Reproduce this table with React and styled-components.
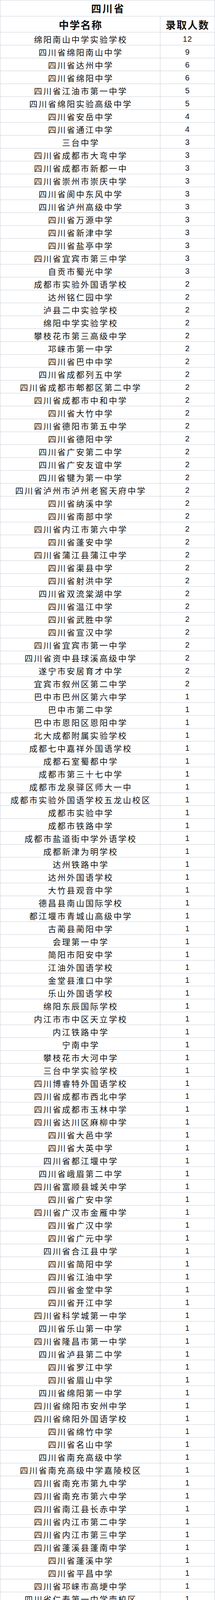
import React from 'react';
import styled, { createGlobalStyle } from 'styled-components';

const GlobalStyle = createGlobalStyle`
  html, body {
    margin: 0;
    padding: 0;
    background: #ffffff;
  }
  body {
    font-family: "Noto Sans CJK SC", "Noto Sans", sans-serif;
    color: #111111;
  }
`;

const LINE = '#cdd0da';

const Sheet = styled.div`
  width: 551px;
  box-sizing: border-box;
  display: flex;
  flex-direction: column;
  border-top: 1px solid ${LINE};
  border-left: 1px solid ${LINE};
  border-right: 1px solid ${LINE};
  background: #ffffff;
  overflow: hidden;
`;

const Title = styled.div`
  flex: none;
  height: 41px;
  box-sizing: border-box;
  border-bottom: 1px solid ${LINE};
  display: flex;
  align-items: center;
  justify-content: center;
  font-size: 26px;
  font-weight: 700;
  letter-spacing: 3px;
  padding-left: 3px;
  line-height: 1;
  overflow: hidden;
`;

const Row = styled.div`
  flex: none;
  display: flex;
  height: ${(p) => (p.$head ? 41 : 33)}px;
  box-sizing: border-box;
  border-bottom: 1px solid ${LINE};
  overflow: hidden;
`;

const NameCell = styled.div`
  flex: none;
  width: 410px;
  height: 100%;
  box-sizing: border-box;
  display: flex;
  align-items: center;
  justify-content: center;
  border-right: 1px solid ${LINE};
  font-size: ${(p) => (p.$head ? 26 : 21)}px;
  font-weight: ${(p) => (p.$head ? 700 : 400)};
  letter-spacing: ${(p) => (p.$head ? 2 : 3)}px;
  padding-left: ${(p) => (p.$head ? 2 : 3)}px;
  padding-top: 2px;
  white-space: nowrap;
  line-height: 1;
  overflow: hidden;
`;

const CountCell = styled.div`
  flex: 1;
  height: 100%;
  box-sizing: border-box;
  display: flex;
  align-items: center;
  justify-content: center;
  font-family: ${(p) =>
    p.$head ? '"Noto Sans CJK SC", sans-serif' : '"Liberation Sans", Arial, sans-serif'};
  font-size: ${(p) => (p.$head ? 26 : 20)}px;
  font-weight: ${(p) => (p.$head ? 700 : 400)};
  letter-spacing: ${(p) => (p.$head ? 2 : 1)}px;
  padding-top: 2px;
  line-height: 1;
  overflow: hidden;
`;

const schools = [
  ['绵阳南山中学实验学校', 12],
  ['四川省绵阳南山中学', 9],
  ['四川省达州中学', 6],
  ['四川省绵阳中学', 6],
  ['四川省江油市第一中学', 5],
  ['四川省绵阳实验高级中学', 5],
  ['四川省安岳中学', 4],
  ['四川省通江中学', 4],
  ['三台中学', 3],
  ['四川省成都市大弯中学', 3],
  ['四川省成都市新都一中', 3],
  ['四川省崇州市崇庆中学', 3],
  ['四川省阆中东风中学', 3],
  ['四川省泸州高级中学', 3],
  ['四川省万源中学', 3],
  ['四川省新津中学', 3],
  ['四川省盐亭中学', 3],
  ['四川省宜宾市第三中学', 3],
  ['自贡市蜀光中学', 3],
  ['成都市实验外国语学校', 2],
  ['达州铭仁园中学', 2],
  ['泸县二中实验学校', 2],
  ['绵阳中学实验学校', 2],
  ['攀枝花市第三高级中学', 2],
  ['邛崃市第一中学', 2],
  ['四川省巴中中学', 2],
  ['四川省成都列五中学', 2],
  ['四川省成都市郫都区第二中学', 2],
  ['四川省成都市中和中学', 2],
  ['四川省大竹中学', 2],
  ['四川省德阳市第五中学', 2],
  ['四川省德阳中学', 2],
  ['四川省广安第二中学', 2],
  ['四川省广安友谊中学', 2],
  ['四川省犍为第一中学', 2],
  ['四川省泸州市泸州老窖天府中学', 2],
  ['四川省纳溪中学', 2],
  ['四川省南部中学', 2],
  ['四川省内江市第六中学', 2],
  ['四川省蓬安中学', 2],
  ['四川省蒲江县蒲江中学', 2],
  ['四川省渠县中学', 2],
  ['四川省射洪中学', 2],
  ['四川省双流棠湖中学', 2],
  ['四川省温江中学', 2],
  ['四川省武胜中学', 2],
  ['四川省宣汉中学', 2],
  ['四川省宜宾市第一中学', 2],
  ['四川省资中县球溪高级中学', 2],
  ['遂宁市安居育才中学', 2],
  ['宜宾市叙州区第二中学', 2],
  ['巴中市巴州区第六中学', 1],
  ['巴中市第二中学', 1],
  ['巴中市恩阳区恩阳中学', 1],
  ['北大成都附属实验学校', 1],
  ['成都七中嘉祥外国语学校', 1],
  ['成都石室蜀都中学', 1],
  ['成都市第三十七中学', 1],
  ['成都市龙泉驿区师大一中', 1],
  ['成都市实验外国语学校五龙山校区', 1],
  ['成都市实验中学', 1],
  ['成都市铁路中学', 1],
  ['成都市盐道街中学外语学校', 1],
  ['成都新津为明学校', 1],
  ['达州铁路中学', 1],
  ['达州外国语学校', 1],
  ['大竹县观音中学', 1],
  ['德昌县南山国际学校', 1],
  ['都江堰市青城山高级中学', 1],
  ['古蔺县蔺阳中学', 1],
  ['会理第一中学', 1],
  ['简阳市阳安中学', 1],
  ['江油外国语学校', 1],
  ['金堂县淮口中学', 1],
  ['乐山外国语学校', 1],
  ['绵阳东辰国际学校', 1],
  ['内江市市中区天立学校', 1],
  ['内江铁路中学', 1],
  ['宁南中学', 1],
  ['攀枝花市大河中学', 1],
  ['三台中学实验学校', 1],
  ['四川博睿特外国语学校', 1],
  ['四川省成都市西北中学', 1],
  ['四川省成都市玉林中学', 1],
  ['四川省达川区麻柳中学', 1],
  ['四川省大邑中学', 1],
  ['四川省大英中学', 1],
  ['四川省都江堰中学', 1],
  ['四川省峨眉第二中学', 1],
  ['四川省富顺县城关中学', 1],
  ['四川省广安中学', 1],
  ['四川省广汉市金雁中学', 1],
  ['四川省广汉中学', 1],
  ['四川省广元中学', 1],
  ['四川省合江县中学', 1],
  ['四川省简阳中学', 1],
  ['四川省江油中学', 1],
  ['四川省金堂中学', 1],
  ['四川省开江中学', 1],
  ['四川省科学城第一中学', 1],
  ['四川省乐山第一中学', 1],
  ['四川省隆昌市第一中学', 1],
  ['四川省泸县第二中学', 1],
  ['四川省罗江中学', 1],
  ['四川省眉山中学', 1],
  ['四川省绵阳第一中学', 1],
  ['四川省绵阳市安州中学', 1],
  ['四川省绵阳外国语学校', 1],
  ['四川省绵竹中学', 1],
  ['四川省名山中学', 1],
  ['四川省南充高级中学', 1],
  ['四川省南充高级中学嘉陵校区', 1],
  ['四川省南充市第九中学', 1],
  ['四川省南充市第六中学', 1],
  ['四川省南江县长赤中学', 1],
  ['四川省内江市第二中学', 1],
  ['四川省内江市第三中学', 1],
  ['四川省蓬溪县蓬南中学', 1],
  ['四川省蓬溪中学', 1],
  ['四川省平昌中学', 1],
  ['四川省邛崃市高埂中学', 1],
  ['四川省仁寿第一中学南校区', 1],
  ['四川省什邡中学', 1],
  ['四川省双流永安中学', 1],
  ['四川省双流中学', 1],
  ['四川省遂宁高级实验学校', 1],
  ['四川省遂宁市安居第一高级中学', 1],
  ['四川省遂宁中学', 1],
  ['四川省旺苍中学', 1],
  ['四川省武胜烈面中学', 1],
  ['四川省兴文第二中学', 1],
  ['四川省仪陇宏德中学', 1],
  ['四川省仪陇马鞍中学', 1],
  ['四川省营山县第二中学', 1],
  ['四川省岳池县第一中学', 1],
  ['四川省中江中学', 1],
  ['四川省资阳中学', 1],
  ['遂宁东辰荣兴国际学校', 1],
  ['遂宁中学外国语实验学校', 1],
  ['通江县涪阳中学', 1],
  ['威远中学', 1],
  ['西南大学第三实验学校', 1],
  ['西南交通大学附属中学', 1],
  ['宜宾市翠屏区天立学校', 1],
  ['宜宾市叙州区第一中学', 1],
  ['自贡衡川实验学校', 1],
];

const App = () => {
  return (
    <>
      <GlobalStyle />
      <Sheet>
        <Title>四川省</Title>
        <Row $head>
          <NameCell $head>中学名称</NameCell>
          <CountCell $head>录取人数</CountCell>
        </Row>
        {schools.map(([name, count], index) => (
          <Row key={index}>
            <NameCell>{name}</NameCell>
            <CountCell>{count}</CountCell>
          </Row>
        ))}
      </Sheet>
    </>
  );
};

export default App;
